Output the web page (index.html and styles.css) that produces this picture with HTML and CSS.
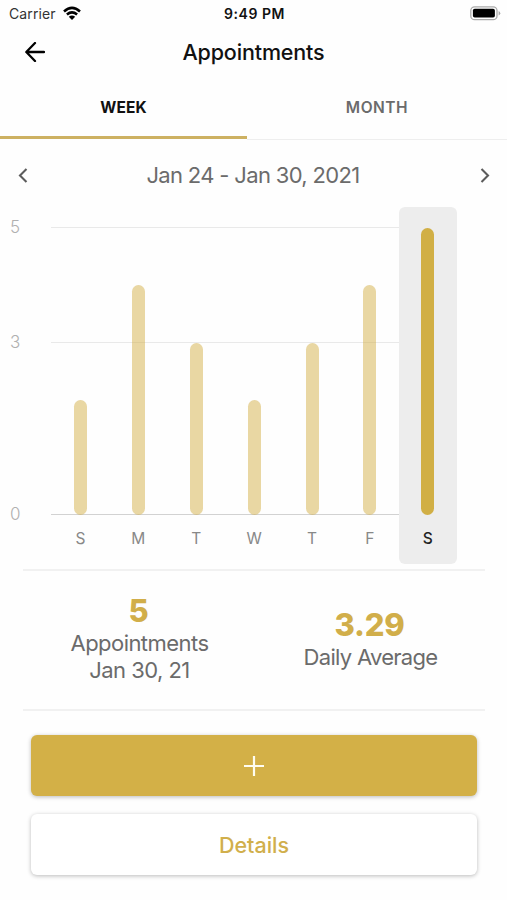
FILE: index.html
```html
<!DOCTYPE html>
<html lang="en">
<head>
<meta charset="utf-8">
<title>Appointments</title>
<link rel="stylesheet" href="styles.css">
</head>
<body>
<div class="status">
  <div class="carrier"><span class="carrier-name">Carrier</span>
    <svg class="wifi" width="20" height="15" viewBox="0 0 20 15"><path d="M2 5.4Q10-1.5 18 5.4M4.9 8.5Q10 4.3 15.1 8.5" fill="none" stroke="#000" stroke-width="2.6"/><path d="M6.8 10.8Q10 8.3 13.2 10.8L10 14Z"/></svg>
  </div>
  <span class="time">9:49 PM</span>
  <svg class="battery" width="31" height="15" viewBox="0 0 31 15"><rect x=".8" y=".8" width="26.2" height="12.9" rx="3.8" fill="#fff" stroke="#aaa" stroke-width="1.3"/><rect x="2.9" y="2.8" width="22" height="8.8" rx="1.8"/><path d="M28.6 5v4.4q1.7-.7 1.7-2.2T28.6 5Z" fill="#aaa"/></svg>
</div>
<header class="nav">
  <svg class="back" width="20" height="20" viewBox="0 0 20 20"><path d="M10 1 1.3 10l8.7 9M1.8 10H19" fill="none" stroke="#000" stroke-width="2.3" stroke-linecap="round" stroke-linejoin="round"/></svg>
  <h1 class="title">Appointments</h1>
</header>
<nav class="tabs">
  <div class="tab active"><span>WEEK</span></div>
  <div class="tab"><span>MONTH</span></div>
</nav>
<div class="range">
  <svg width="10" height="15" viewBox="0 0 10 15"><path d="M8.5 1 2 7.5 8.5 14" fill="none" stroke="#5c5c5c" stroke-width="2.1"/></svg>
  <span class="dates">Jan 24 - Jan 30, 2021</span>
  <svg width="10" height="15" viewBox="0 0 10 15"><path d="M1.5 1 8 7.5 1.5 14" fill="none" stroke="#5c5c5c" stroke-width="2.1"/></svg>
</div>
<section class="chart">
  <div class="axis"><span>5</span><span>3</span><span>0</span></div>
  <div class="lines"><i></i><i></i><i></i></div>
  <div class="days">
    <div class="day"><div class="bar" style="height:40%"></div><span>S</span></div>
    <div class="day"><div class="bar" style="height:80%"></div><span>M</span></div>
    <div class="day"><div class="bar" style="height:60%"></div><span>T</span></div>
    <div class="day"><div class="bar" style="height:40%"></div><span>W</span></div>
    <div class="day"><div class="bar" style="height:60%"></div><span>T</span></div>
    <div class="day"><div class="bar" style="height:80%"></div><span>F</span></div>
    <div class="day selected"><div class="bar" style="height:100%"></div><span>S</span></div>
  </div>
</section>
<section class="stats">
  <div class="stat"><strong>5</strong><span>Appointments</span><span>Jan 30, 21</span></div>
  <div class="stat"><strong>3.29</strong><span class="average">Daily Average</span></div>
</section>
<div class="actions">
  <button class="btn primary" aria-label="Add"><svg width="22" height="22" viewBox="0 0 22 22"><path d="M11 1v20M1 11h20" stroke="#fffdf0" stroke-width="2.2"/></svg></button>
  <button class="btn">Details</button>
</div>
</body>
</html>
```
FILE: styles.css
```css
* { box-sizing: border-box; }
body {
  margin: 0;
  width: 507px;
  height: 900px;
  overflow: hidden;
  background: #fefefe;
  color: #111;
  font-family: Inter, "Liberation Sans", sans-serif;
}
svg { display: block; }
.status {
  display: grid;
  grid-template-columns: 1fr auto 1fr;
  align-items: center;
  height: 27px;
  padding: 0 6px 0 9px;
}
.carrier { display: flex; align-items: center; gap: 6px; }
.carrier-name { font-size: 14px; letter-spacing: .1px; color: #333; }
.time { font-size: 14px; font-weight: 600; letter-spacing: .55px; margin-right: 1px; }
.battery { justify-self: end; }
.nav {
  display: grid;
  grid-template-columns: 20px 1fr 20px;
  align-items: center;
  height: 50px;
  padding: 0 25px;
}
.title { margin: 0; font-size: 21.5px; font-weight: 500; letter-spacing: -.15px; text-align: center; }
.tabs { display: grid; grid-template-columns: 247px 1fr; height: 63px; }
.tab {
  display: flex;
  align-items: center;
  justify-content: center;
  border-bottom: 1px solid #eee;
  padding-bottom: 1px;
  color: #6b6b6b;
  font-size: 15.5px;
  font-weight: 600;
  letter-spacing: .5px;
}
.tab.active { height: 62px; border-bottom: 3px solid #cdb162; padding: 1px 0 0; color: #111; font-weight: 700; letter-spacing: .1px; }
.range {
  display: flex;
  align-items: center;
  justify-content: space-between;
  height: 67px;
  padding: 4px 17px 0 18px;
}
.dates { font-size: 22px; letter-spacing: -.66px; color: #6b6b6b; margin: -1px 2px 0 0; }
.chart {
  display: grid;
  grid-template-columns: 51px 406px;
  grid-template-rows: 357px;
  height: 362px;
}
.axis {
  display: grid;
  grid-template-rows: 115px 172px 40px;
  padding: 8px 0 0 10px;
  color: #b0b0b0;
  font-size: 17px;
  font-weight: 300;
  line-height: 24px;
}
.lines {
  grid-area: 1 / 2;
  display: grid;
  grid-template-rows: 115px 172px 1px;
  width: 400px;
  padding-top: 20px;
}
.lines i { height: 1px; background: #e9e9e9; }
.lines i:last-child { background: #d2d2d2; }
.days { grid-area: 1 / 2; display: grid; grid-template-columns: repeat(7, 57.9px); margin-left: .5px; }
.day {
  display: grid;
  grid-template-rows: 287px 46px;
  justify-items: center;
  align-items: end;
  padding-top: 21px;
  color: #888;
  font-size: 15.5px;
}
.day span { align-self: center; }
.bar { width: 13px; border-radius: 7px; background: rgba(212, 176, 71, .5); }
.day.selected { border-radius: 6px; background: #ededed; color: #222; font-weight: 500; }
.selected .bar { background: #d1af45; }
.stats {
  display: grid;
  grid-template-columns: 1fr 1fr;
  align-items: center;
  height: 142px;
  margin: 0 22px 0 23px;
  padding-bottom: 4px;
  border-top: 2px solid #f1f1f1;
  border-bottom: 2px solid #f1f1f1;
}
.stat { display: flex; flex-direction: column; align-items: center; color: #6b6b6b; font-size: 22px; letter-spacing: -.55px; line-height: 27px; padding-left: 2px; }
.stat strong { margin-right: 2px; color: #d1ae4a; font-size: 31px; font-weight: 800; letter-spacing: -.2px; line-height: 38px; }
.stat .average { letter-spacing: -.7px; }
.actions { display: flex; flex-direction: column; gap: 18px; padding: 24px 30px 0 31px; }
.btn {
  display: flex;
  align-items: center;
  justify-content: center;
  height: 61px;
  border: 0;
  border-radius: 6px;
  background: #fff;
  box-shadow: 0 1px 4px rgba(0, 0, 0, .27);
  color: #d1af4c;
  font: 500 21.5px Inter, sans-serif;
}
.btn.primary { background: #d3b047; }
```
